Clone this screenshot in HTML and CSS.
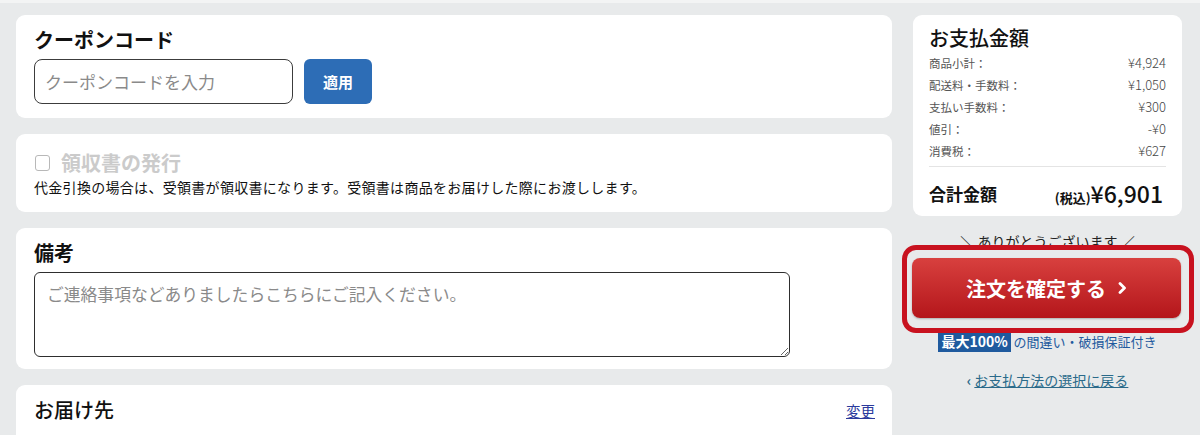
FILE: index.html
```html
<!DOCTYPE html>
<html lang="ja">
<head>
<meta charset="utf-8">
<title>注文確認</title>
<link rel="stylesheet" href="styles.css">
</head>
<body>
<div class="page">
  <main class="main-col">
    <section class="card card-coupon">
      <h2 class="card-title">クーポンコード</h2>
      <div class="coupon-row">
        <input class="coupon-input" type="text" placeholder="クーポンコードを入力">
        <button class="btn-apply" type="button">適用</button>
      </div>
    </section>

    <section class="card card-receipt">
      <div class="receipt-head">
        <span class="checkbox"></span>
        <span class="receipt-title">領収書の発行</span>
      </div>
      <p class="receipt-note">代金引換の場合は、受領書が領収書になります。受領書は商品をお届けした際にお渡しします。</p>
    </section>

    <section class="card card-notes">
      <h2 class="card-title">備考</h2>
      <textarea class="notes-area" placeholder="ご連絡事項などありましたらこちらにご記入ください。"></textarea>
    </section>

    <section class="card card-address">
      <div class="address-head">
        <h2 class="card-title title-normal">お届け先</h2>
        <a class="change-link" href="#">変更</a>
      </div>
    </section>
  </main>

  <aside class="side-col">
    <section class="card summary">
      <h2 class="summary-title">お支払金額</h2>
      <dl class="summary-list">
        <div class="summary-row"><dt>商品小計：</dt><dd>¥4,924</dd></div>
        <div class="summary-row"><dt>配送料・手数料：</dt><dd>¥1,050</dd></div>
        <div class="summary-row"><dt>支払い手数料：</dt><dd>¥300</dd></div>
        <div class="summary-row"><dt>値引：</dt><dd>-¥0</dd></div>
        <div class="summary-row"><dt>消費税：</dt><dd>¥627</dd></div>
      </dl>
      <div class="total-row">
        <span class="total-label">合計金額</span>
        <span class="total-value"><span class="tax-note">(税込)</span>¥6,901</span>
      </div>
    </section>

    <p class="thanks">＼ ありがとうございます ／</p>

    <div class="confirm-wrap">
      <button class="btn-confirm" type="button">注文を確定する<svg class="chev" width="9" height="12" viewBox="0 0 9 12"><polyline points="2,1.5 6.5,6 2,10.5" fill="none" stroke="#fff" stroke-width="2.8" stroke-linecap="round" stroke-linejoin="round"/></svg></button>
      <span class="highlight-ring"></span>
    </div>

    <p class="guarantee"><span class="badge">最大100%</span> の間違い・破損保証付き</p>

    <p class="back"><span class="back-chev">‹</span> <a class="back-link" href="#">お支払方法の選択に戻る</a></p>
  </aside>
</div>
</body>
</html>
```

FILE: styles.css
```css
* { box-sizing: border-box; }

html, body {
  margin: 0;
  padding: 0;
  height: 435px;
  overflow: hidden;
}

body {
  background: #e8eaeb;
  font-family: "Noto Sans CJK JP", "Noto Sans", sans-serif;
  color: #111;
  border-top: 3px solid #f3f4f4;
}

.page {
  display: flex;
  gap: 21px;
  padding: 12px 0 0 16px;
}

.main-col {
  width: 876px;
  display: flex;
  flex-direction: column;
  gap: 16px;
}

.card {
  background: #fff;
  border-radius: 9px;
}

.card-title {
  margin: 0;
  font-size: 20px;
  line-height: 28px;
  font-weight: 700;
  color: #111;
}

.title-normal { font-weight: 500; }

/* coupon */
.card-coupon { padding: 11px 18px 14px; }

.coupon-row {
  display: flex;
  gap: 11px;
  margin-top: 5px;
}

.coupon-input {
  width: 259px;
  height: 45px;
  border: 1px solid #3c3c3c;
  border-radius: 8px;
  padding: 0 10px;
  font-family: inherit;
  font-size: 17px;
  outline: none;
}

.coupon-input::placeholder { color: #8a8a8a; }

.btn-apply {
  width: 68px;
  height: 45px;
  border: none;
  border-radius: 6px;
  background: #2d6db6;
  color: #fff;
  font-family: inherit;
  font-size: 15px;
  font-weight: 700;
}

/* receipt */
.card-receipt { padding: 16px 18px 15px; }

.receipt-head {
  display: flex;
  align-items: center;
  gap: 11px;
  height: 26px;
}

.checkbox {
  display: block;
  flex: 0 0 15px;
  width: 15px;
  height: 16px;
  border: 1.5px solid #b8b8b8;
  border-radius: 3px;
  margin-left: 1px;
}

.receipt-title {
  font-size: 20px;
  font-weight: 700;
  color: #cbcbcb;
  line-height: 26px;
}

.receipt-note {
  margin: 1px 0 0;
  font-size: 14px;
  letter-spacing: 0.3px;
  line-height: 20px;
  color: #111;
}

/* notes */
.card-notes { padding: 11px 18px 12px; }

.notes-area {
  display: block;
  width: 756px;
  height: 85px;
  margin-top: 5px;
  border: 1px solid #2e2e2e;
  border-radius: 6px;
  padding: 9px 12px;
  font-family: inherit;
  font-size: 16.8px;
  line-height: 24px;
  outline: none;
}

.notes-area::placeholder { color: #8a8a8a; }

/* address */
.card-address {
  padding: 11px 17px 20px 18px;
  height: 60px;
}

.address-head {
  display: flex;
  justify-content: space-between;
  align-items: center;
}

.change-link {
  font-size: 14.5px;
  color: #2b3a9c;
  text-decoration: underline;
}

/* side column */
.side-col {
  width: 269px;
  display: flex;
  flex-direction: column;
}

.summary { padding: 8px 16px 5px; }

.summary-title {
  margin: 0;
  font-size: 20px;
  line-height: 29px;
  font-weight: 500;
  color: #111;
}

.summary-list { margin: 0; }

.summary-row {
  display: flex;
  justify-content: space-between;
  align-items: baseline;
  line-height: 22px;
  font-size: 11.5px;
  color: #555;
}

.summary-row dt, .summary-row dd { margin: 0; }

.summary-row dd {
  font-size: 13px;
  font-weight: 300;
  color: #444;
}

.total-row {
  display: flex;
  justify-content: space-between;
  align-items: center;
  margin-top: 4px;
  border-top: 1px solid #e4e4e4;
  padding-top: 8px;
  height: 45px;
}

.total-label {
  font-size: 17px;
  font-weight: 700;
}

.total-value {
  font-size: 23px;
  font-weight: 500;
  color: #111;
  padding-right: 3px;
}

.tax-note {
  font-size: 13px;
  font-weight: 700;
}

.thanks {
  margin: 17px 0 0;
  text-align: center;
  font-size: 14px;
  line-height: 16px;
  color: #222;
}

.confirm-wrap {
  position: relative;
  margin-top: 9px;
}

.btn-confirm {
  display: flex;
  align-items: center;
  justify-content: center;
  gap: 12px;
  width: 269px;
  height: 60px;
  margin-left: -1px;
  border: none;
  border-radius: 8px;
  background: linear-gradient(#d8403e, #b4161b);
  color: #fff;
  font-family: inherit;
  font-size: 20px;
  font-weight: 700;
  box-shadow: 0 1px 2px rgba(0,0,0,0.25);
}

.chev { display: block; }

.highlight-ring {
  position: absolute;
  top: -13px;
  left: -11px;
  right: -12px;
  bottom: -15px;
  border: 5px solid #c8121f;
  border-radius: 14px;
  pointer-events: none;
}

.guarantee {
  margin: 13px 0 0;
  text-align: center;
  font-size: 13px;
  line-height: 20px;
  color: #1f5a9e;
}

.badge {
  background: #1f5a9e;
  color: #fff;
  font-size: 14px;
  font-weight: 700;
  padding: 1px 3px;
}

.back {
  margin: 19px 0 0;
  text-align: center;
  font-size: 14px;
  line-height: 18px;
  color: #2a6a8a;
}

.back-chev {
  font-size: 14px;
  font-weight: 700;
}

.back-link {
  color: #2a6a8a;
  text-decoration: underline;
}
```
